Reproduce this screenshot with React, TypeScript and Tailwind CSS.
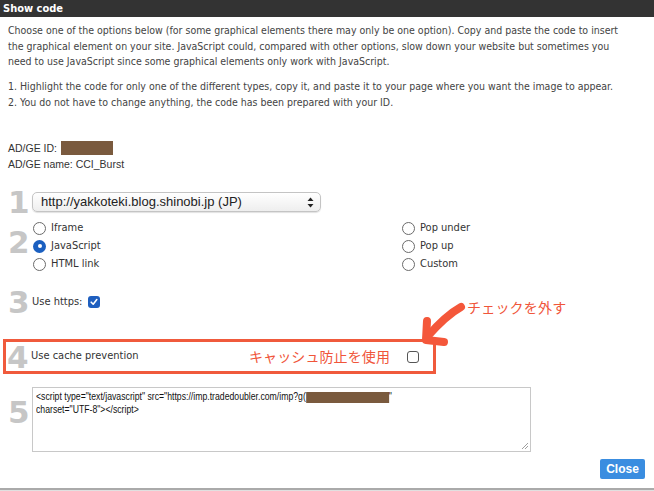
import React from 'react';

const tahoma = '"DejaVu Sans Condensed", "DejaVu Sans", Tahoma, sans-serif';
const helv = '"Liberation Sans", Arial, sans-serif';
const jp = '"Noto Sans CJK JP", sans-serif';

function Digit({ n, className = '' }: { n: string; className?: string }) {
    return (
        <div
            className={`w-[24px] shrink-0 h-[24px] leading-[24px] text-[31px] font-bold text-[#c6c6c6] ${className}`}
            style={{ fontFamily: '"DejaVu Sans", sans-serif' }}
        >
            {n}
        </div>
    );
}

function Radio({ label, checked = false }: { label: string; checked?: boolean }) {
    return (
        <div className="flex items-center h-[18px] gap-[5px]">
            {checked ? (
                <span className="w-[13px] h-[13px] rounded-full bg-[#1a5fc0] flex items-center justify-center">
                    <span className="w-[4px] h-[4px] rounded-full bg-white" />
                </span>
            ) : (
                <span className="w-[13px] h-[13px] rounded-full border border-[#6b6b6b] bg-white" />
            )}
            <span className="text-[11px] text-[#333]">{label}</span>
        </div>
    );
}

export default function App() {
    return (
        <div className="w-[654px] h-[491px] bg-white relative overflow-hidden" style={{ fontFamily: tahoma }}>
            {/* title bar */}
            <div className="h-[17px] bg-[#333333] px-[3px] text-white text-[11px] font-bold leading-[17px]">
                Show code
            </div>

            <div className="pl-[8px]">
                {/* intro */}
                <p className="pt-[6px] text-[10.5px] leading-[15.5px] text-[#444] whitespace-nowrap">
                    Choose one of the options below (for some graphical elements there may only be one option). Copy and paste the code to insert<br />
                    the graphical element on your site. JavaScript could, compared with other options, slow down your website but sometimes you<br />
                    need to use JavaScript since some graphical elements only work with JavaScript.
                </p>
                <p className="mt-[9.5px] text-[10.5px] leading-[15.5px] text-[#444] whitespace-nowrap">
                    1. Highlight the code for only one of the different types, copy it, and paste it to your page where you want the image to appear.<br />
                    2. You do not have to change anything, the code has been prepared with your ID.
                </p>

                {/* ids */}
                <div className="mt-[30px] text-[10.5px] leading-[16px] text-[#333]" style={{ fontFamily: helv }}>
                    <div className="flex items-center gap-[4px]">
                        AD/GE ID:
                        <span className="inline-block w-[52px] h-[14px] bg-[#7a5a3e]" />
                    </div>
                    <div>AD/GE name: CCI_Burst</div>
                </div>

                {/* 1 */}
                <div className="mt-[18px] flex items-center h-[24px]">
                    <Digit n="1" />
                    <div
                        className="w-[289px] h-[20px] rounded-[5px] border border-[#c4c4c4] bg-gradient-to-b from-white to-[#eeeeee] shadow-[0_1px_1px_rgba(0,0,0,0.12)] flex items-center justify-between pl-[8px] pr-[6px] text-[13px] text-[#222]"
                        style={{ fontFamily: helv }}
                    >
                        <span>http://yakkoteki.blog.shinobi.jp (JP)</span>
                        <svg width="7" height="11" viewBox="0 0 7 11">
                            <path d="M3.5 0.5 L6.5 4 L0.5 4 Z" fill="#222" />
                            <path d="M3.5 10.5 L6.5 7 L0.5 7 Z" fill="#222" />
                        </svg>
                    </div>
                </div>

                {/* 2 */}
                <div className="mt-[5px] flex items-start">
                    <Digit n="2" className="mt-[11px]" />
                    <div className="flex">
                        <div className="w-[370px] pl-[1px]">
                            <Radio label="Iframe" />
                            <Radio label="JavaScript" checked />
                            <Radio label="HTML link" />
                        </div>
                        <div>
                            <Radio label="Pop under" />
                            <Radio label="Pop up" />
                            <Radio label="Custom" />
                        </div>
                    </div>
                </div>

                {/* 3 */}
                <div className="mt-[17px] flex items-center h-[24px]">
                    <Digit n="3" className="w-[22px]" />
                    <span className="text-[11px] text-[#333]">Use https:</span>
                    <span className="ml-[6px] w-[12px] h-[12px] rounded-[3px] bg-[#1f5fbf] flex items-center justify-center">
                        <svg width="8" height="8" viewBox="0 0 8 8">
                            <path d="M1.2 4.2 L3.2 6.2 L6.8 1.6" stroke="white" strokeWidth="1.6" fill="none" strokeLinecap="round" strokeLinejoin="round" />
                        </svg>
                    </span>
                </div>

                {/* 4 */}
                <div className="relative pt-[25px]">
                    <div className="-ml-[5px] w-[433px] h-[35px] border-[3px] border-[#f05a3c] flex items-center pl-[1px]">
                        <Digit n="4" className="w-[23px]" />
                        <span className="w-[218px] text-[11px] text-[#333]">Use cache prevention</span>
                        <span className="text-[14px] text-[#f0553a] tracking-[0.1px]" style={{ fontFamily: jp }}>
                            キャッシュ防止を使用
                        </span>
                        <span className="ml-[17px] w-[12px] h-[12px] rounded-[3px] border border-[#555] bg-white" />
                    </div>
                    <svg className="absolute left-[400px] -top-[14px]" width="70" height="60" viewBox="0 0 70 60">
                        <path d="M53 7 C44 12 32 22 19 37" stroke="#f4573a" strokeWidth="8" fill="none" strokeLinecap="round" />
                        <path d="M19 21 L18 40 L36 42" stroke="#f4573a" strokeWidth="8" fill="none" strokeLinecap="round" strokeLinejoin="round" />
                    </svg>
                    <span
                        className="absolute left-[459px] -top-[17px] text-[14px] text-[#f0553a] tracking-[0.2px]"
                        style={{ fontFamily: jp }}
                    >
                        チェックを外す
                    </span>
                </div>

                {/* 5 */}
                <div className="mt-[13px] flex items-start">
                    <Digit n="5" className="mt-[13px]" />
                    <div className="relative w-[499px] h-[65px] border border-[#c8c8c8] px-[3px] pt-[2px] overflow-hidden">
                        <div
                            className="origin-top-left scale-x-[0.79] text-[11px] leading-[12px] text-[#111] whitespace-nowrap"
                            style={{ fontFamily: helv }}
                        >
                            &lt;script type="text/javascript" src="https://imp.tradedoubler.com/imp?g(
                            <span className="inline-block align-middle w-[105px] h-[11px] bg-[#7a5a3e]" />"<br />
                            charset="UTF-8"&gt;&lt;/script&gt;
                        </div>
                        <svg className="absolute right-[2px] bottom-[2px]" width="7" height="7" viewBox="0 0 7 7">
                            <path d="M1 7 L7 1 M4 7 L7 4" stroke="#888" strokeWidth="0.8" />
                        </svg>
                    </div>
                </div>

                {/* close */}
                <div className="mt-[7px] flex justify-end pr-[9px]">
                    <button
                        className="w-[45px] h-[20px] bg-[#3a8de0] text-white text-[12px] font-bold rounded-[2px]"
                        style={{ fontFamily: helv }}
                    >
                        Close
                    </button>
                </div>
            </div>

            <div className="absolute left-0 right-0 top-[488px] h-[2px] bg-[#aaaaaa]" />
            <div className="absolute left-0 right-0 top-[490px] h-[1px] bg-[#e0e0e0]" />
        </div>
    );
}
